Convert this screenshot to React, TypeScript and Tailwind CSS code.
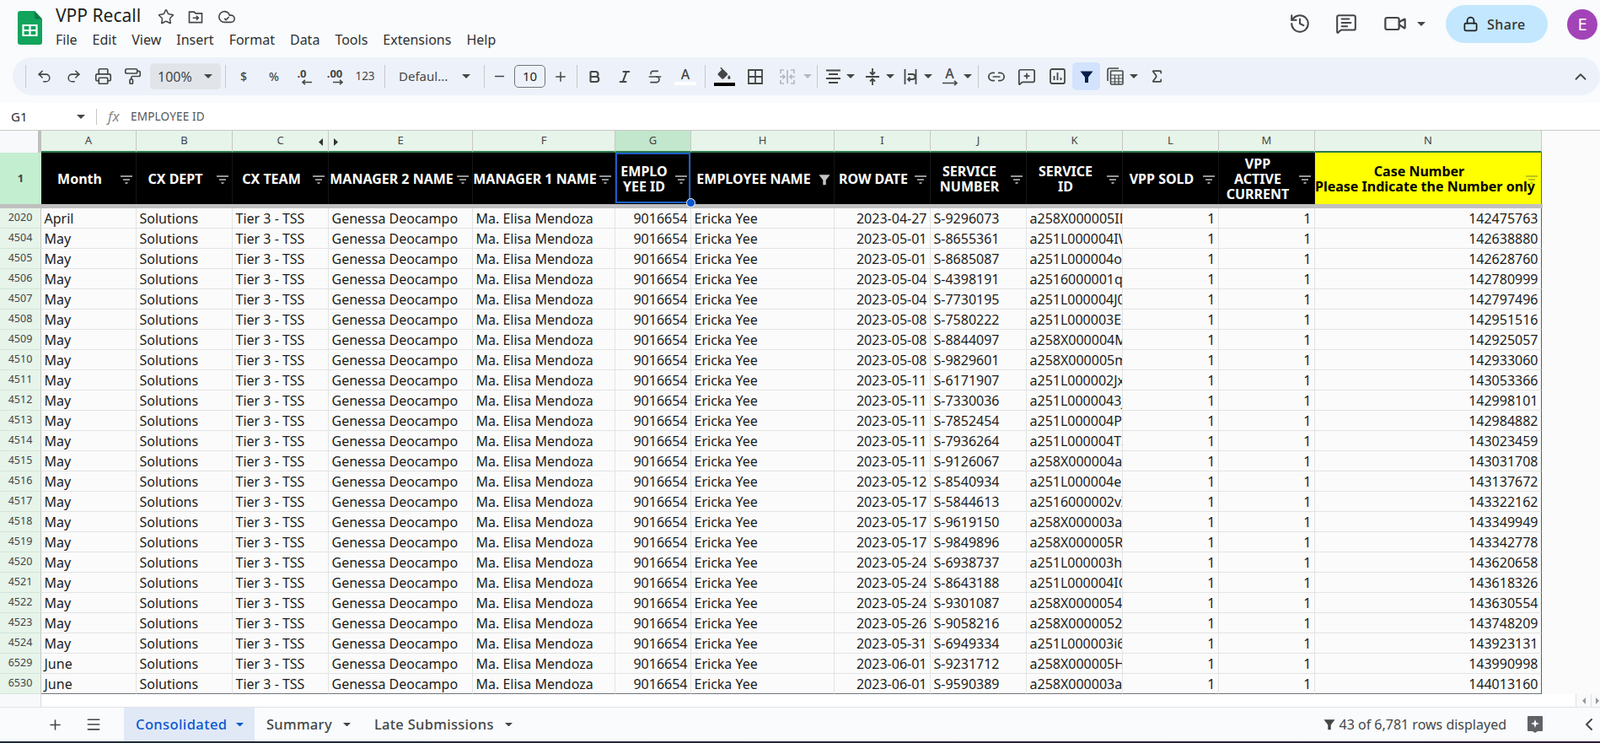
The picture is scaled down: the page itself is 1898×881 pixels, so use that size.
import React from "react";
import {
  Undo2, Redo2, Printer, PaintRoller, Bold, Italic, Strikethrough, Link2, MessageSquarePlus, Sigma,
  ChevronUp, ChevronLeft, History, MessageSquareText, Video, Lock, Star, Plus, Minus, Menu as MenuIcon,
} from "lucide-react";

const ic = "#444746";
const cols = "grid grid-cols-[49px_113px_114px_114px_171px_169px_90px_170px_114px_114px_114px_114px_114px_269px]";

const Caret = ({ color = ic, w = 10 }: { color?: string; w?: number }) => (
  <svg width={w} height={w / 2} viewBox="0 0 10 5"><path d="M0 0h10L5 5z" fill={color} /></svg>
);
const Sep = ({ ml, mr = 0 }: { ml: string; mr?: number }) => (
  <div className={`${ml} h-[27px] w-px shrink-0 bg-[#c7c7c7]`} style={{ marginRight: mr }} />
);
const Btn = ({ w, children, className = "" }: { w: string; children: React.ReactNode; className?: string }) => (
  <div className={`${w} h-[31px] shrink-0 flex items-center justify-center ${className}`}>{children}</div>
);
const Funnel = ({ s = 16, color = ic }: { s?: number; color?: string }) => (
  <svg width={s} height={s} viewBox="0 0 16 16"><path d="M0.5 1.5h15L10 8.5V15H6V8.5z" fill={color} /></svg>
);
const FilterLines = ({ color = "#c4c4c4" }: { color?: string }) => (
  <svg width="14" height="10" viewBox="0 0 14 10">
    <path d="M0 1h14M3 5h8M5.5 9h3" stroke={color} strokeWidth="1.7" fill="none" />
  </svg>
);

const rows: [string, string, string, string, string, string][] = [
  ["2020", "April", "2023-04-27", "S-9296073", "a258X000005IBCQA2", "142475763"],
  ["4504", "May", "2023-05-01", "S-8655361", "a251L000004IWSQA2", "142638880"],
  ["4505", "May", "2023-05-01", "S-8685087", "a251L000004o7IQAQ", "142628760"],
  ["4506", "May", "2023-05-04", "S-4398191", "a2516000001qXYQAY", "142780999"],
  ["4507", "May", "2023-05-04", "S-7730195", "a251L000004J0IQAU", "142797496"],
  ["4508", "May", "2023-05-08", "S-7580222", "a251L000003EgQAI", "142951516"],
  ["4509", "May", "2023-05-08", "S-8844097", "a258X000004McQAI", "142925057"],
  ["4510", "May", "2023-05-08", "S-9829601", "a258X000005mJQAQ", "142933060"],
  ["4511", "May", "2023-05-11", "S-6171907", "a251L000002JxEQAU", "143053366"],
  ["4512", "May", "2023-05-11", "S-7330036", "a251L0000043jTQAQ", "142998101"],
  ["4513", "May", "2023-05-11", "S-7852454", "a251L000004PVQAY", "142984882"],
  ["4514", "May", "2023-05-11", "S-7936264", "a251L000004T3QAI", "143023459"],
  ["4515", "May", "2023-05-11", "S-9126067", "a258X000004a7QAQ", "143031708"],
  ["4516", "May", "2023-05-12", "S-8540934", "a251L000004elEQAQ", "143137672"],
  ["4517", "May", "2023-05-17", "S-5844613", "a2516000002vXQAQ", "143322162"],
  ["4518", "May", "2023-05-17", "S-9619150", "a258X000003aMQAQ", "143349949"],
  ["4519", "May", "2023-05-17", "S-9849896", "a258X000005R6QAI", "143342778"],
  ["4520", "May", "2023-05-24", "S-6938737", "a251L000003hv1QAA", "143620658"],
  ["4521", "May", "2023-05-24", "S-8643188", "a251L000004IOSQA2", "143618326"],
  ["4522", "May", "2023-05-24", "S-9301087", "a258X00000542QAA", "143630554"],
  ["4523", "May", "2023-05-26", "S-9058216", "a258X0000052CQAQ", "143748209"],
  ["4524", "May", "2023-05-31", "S-6949334", "a251L000003i6nQAA", "143923131"],
  ["6529", "June", "2023-06-01", "S-9231712", "a258X000005HLQAY", "143990998"],
  ["6530", "June", "2023-06-01", "S-9590389", "a258X000003a5QAA", "144013160"],
];

const letters = ["A", "B", "C", "E", "F", "G", "H", "I", "J", "K", "L", "M", "N"];
const heads: { t: React.ReactNode; f?: boolean }[] = [
  { t: "Month" }, { t: "CX DEPT" }, { t: "CX TEAM" }, { t: "MANAGER 2 NAME" }, { t: "MANAGER 1 NAME" },
  { t: <>EMPLO<br />YEE ID</> }, { t: "EMPLOYEE NAME", f: true }, { t: "ROW DATE" },
  { t: <>SERVICE<br />NUMBER</> }, { t: <>SERVICE<br />ID</> }, { t: "VPP SOLD" },
  { t: <>VPP<br />ACTIVE<br />CURRENT</> },
];

const Cell = ({ children, right, last }: { children: React.ReactNode; right?: boolean; last?: boolean }) => (
  <div className={`h-[24px] leading-[24px] px-[3.5px] overflow-hidden whitespace-nowrap text-[#1c1c1c] border-b ${last ? "border-b-[#70757a]" : "border-b-[#e2e3e3]"} border-r border-r-[#e2e3e3] ${right ? "text-right" : ""}`}>
    {children}
  </div>
);

export default function App() {
  return (
    <div className="w-[1898px] h-[881px] flex flex-col overflow-hidden bg-[#f9fbfd] font-['Roboto',sans-serif] text-[#444746]">
      {/* Title bar */}
      <div className="h-[68px] shrink-0 flex">
        <div className="pl-[21px] pt-[13px] w-[66px] shrink-0">
          <svg width="29" height="40" viewBox="0 0 29 40">
            <path d="M3 0h17l9 9.5V37a3 3 0 0 1-3 3H3a3 3 0 0 1-3-3V3a3 3 0 0 1 3-3z" fill="#11a45c" />
            <path d="M20 0l9 9.5h-6.5A2.5 2.5 0 0 1 20 7z" fill="#0b7d45" />
            <path d="M6.5 17h16v12h-16z" fill="none" stroke="#fff" strokeWidth="2.2" />
            <path d="M14.5 17v12M6.5 23h16" stroke="#fff" strokeWidth="2.2" />
          </svg>
        </div>
        <div className="flex flex-col">
          <div className="flex items-center h-[36px]">
            <span className="text-[21px] leading-[36px] text-[#1f1f1f] w-[121px]">VPP Recall</span>
            <Star size={20} strokeWidth={1.8} color={ic} className="mr-[15px] mt-[4px]" />
            <svg width="20" height="20" viewBox="0 0 24 24" fill="none" stroke={ic} strokeWidth="2" className="mr-[15px] mt-[4px]">
              <path d="M3 5h7l2 2h9v13H3z" /><path d="M8 13.5h8M13 10.5l3 3-3 3" />
            </svg>
            <svg width="24" height="22" viewBox="0 0 24 24" fill="none" stroke={ic} strokeWidth="1.8" className="mt-[4px]">
              <path d="M17.5 19H9a7 7 0 1 1 6.71-9h1.79a4.5 4.5 0 1 1 0 9Z" /><path d="m9 14 2 2 4-4" />
            </svg>
          </div>
          <div className="flex gap-[18px] text-[16px] leading-[22px] text-[#303030] mt-[0px]">
            {["File", "Edit", "View", "Insert", "Format", "Data", "Tools", "Extensions", "Help"].map((m) => (
              <span key={m}>{m}</span>
            ))}
          </div>
        </div>
        <div className="ml-auto flex items-start pt-[6px] pr-[3px]">
          <History size={26} strokeWidth={1.9} color={ic} className="mt-[9px] mr-[29px]" />
          <MessageSquareText size={26} strokeWidth={1.9} color={ic} className="mt-[9px] mr-[31px]" />
          <Video size={28} strokeWidth={1.9} color={ic} className="mt-[8px] mr-[12px]" />
          <div className="mt-[20px] mr-[24px]"><Caret /></div>
          <div className="w-[121px] h-[45px] rounded-full bg-[#c2e7ff] flex items-center pl-[20px] text-[#1f1f1f]">
            <Lock size={19} strokeWidth={2.2} color="#1f1f1f" />
            <span className="ml-[10px] text-[16px] font-medium tracking-[0.4px] text-[#333]">Share</span>
          </div>
          <div className="ml-[23px] mt-[5px] w-[36px] h-[36px] rounded-full bg-[#a244b8] text-white flex items-center justify-center text-[20px]">E</div>
        </div>
      </div>

      {/* Toolbar */}
      <div className="h-[45px] shrink-0 ml-[15px] rounded-l-[23px] rounded-r-[23px] bg-[#edf2fa] flex items-center text-[#444746]">
        <Sep ml="ml-[15px]" />
        <div className="ml-[3.5px] flex">
          <Btn w="w-[35px]"><Undo2 size={19} strokeWidth={1.9} color={ic} /></Btn>
          <Btn w="w-[35px]"><Redo2 size={19} strokeWidth={1.9} color={ic} /></Btn>
          <Btn w="w-[35px]"><Printer size={21} strokeWidth={1.9} color={ic} /></Btn>
          <Btn w="w-[35px]"><PaintRoller size={21} strokeWidth={1.9} color={ic} /></Btn>
        </div>
        <div className="ml-[3.5px] w-[84px] h-[31px] rounded-[5px] bg-[#e1e5ea] flex items-center pl-[9px] pr-[10px] justify-between">
          <span className="text-[16px]">100%</span><Caret />
        </div>
        <Sep ml="ml-[5px]" />
        <div className="ml-[3px] flex text-[#444746]">
          <Btn w="w-[36px]"><span className="text-[14px] font-medium">$</span></Btn>
          <Btn w="w-[36px]"><span className="text-[14px] font-medium">%</span></Btn>
          <Btn w="w-[36px]">
            <div className="flex flex-col items-center leading-none">
              <span className="text-[13px] font-bold leading-[13px] -ml-[6px]">.0</span>
              <svg width="14" height="7" viewBox="0 0 14 7" className="ml-[6px]"><path d="M13 3.5H2M5 .8 2 3.5l3 2.7" fill="none" stroke={ic} strokeWidth="1.6" /></svg>
            </div>
          </Btn>
          <Btn w="w-[36px]">
            <div className="flex flex-col items-center leading-none">
              <span className="text-[13px] font-bold leading-[13px]">.00</span>
              <svg width="14" height="7" viewBox="0 0 14 7" className="ml-[8px]"><path d="M1 3.5h11M9 .8l3 2.7-3 2.7" fill="none" stroke={ic} strokeWidth="1.6" /></svg>
            </div>
          </Btn>
          <Btn w="w-[36px]"><span className="text-[13.5px]">123</span></Btn>
        </div>
        <Sep ml="ml-[5px]" />
        <div className="ml-[5px] w-[107px] h-[31px] flex items-center justify-between pl-[11px] pr-[11px]">
          <span className="text-[15px]">Defaul...</span><Caret />
        </div>
        <Sep ml="ml-[5px]" />
        <Btn w="w-[35px]"><Minus size={17} strokeWidth={2} color={ic} /></Btn>
        <div className="w-[37px] h-[27px] border border-[#70757a] rounded-[5px] flex items-center justify-center text-[15px] text-[#1f1f1f]">10</div>
        <Btn w="w-[35px]"><Plus size={18} strokeWidth={2} color={ic} /></Btn>
        <Sep ml="ml-[2px]" />
        <div className="ml-[2px] flex">
          <Btn w="w-[36px]"><Bold size={18} strokeWidth={2.8} color={ic} /></Btn>
          <Btn w="w-[36px]"><Italic size={18} strokeWidth={2.8} color={ic} /></Btn>
          <Btn w="w-[36px]"><Strikethrough size={20} strokeWidth={2} color={ic} /></Btn>
          <Btn w="w-[36px]">
            <div className="flex flex-col items-center">
              <span className="text-[16px] font-medium leading-[17px] text-[#444746]">A</span>
              <div className="w-[26px] h-[4px] bg-white" />
            </div>
          </Btn>
        </div>
        <Sep ml="ml-[5px]" />
        <div className="ml-[4px] flex">
          <Btn w="w-[36px]">
            <div className="flex flex-col items-center">
              <svg width="20" height="18" viewBox="0 0 24 20">
                <path d="M16.56 8.94 7.62 0 6.21 1.41l2.38 2.38-5.15 5.15c-.59.59-.59 1.54 0 2.12l5.5 5.5c.29.29.68.44 1.06.44s.77-.15 1.06-.44l5.5-5.5c.59-.58.59-1.53 0-2.12z" fill={ic} />
                <path d="M19 11.5s-2 2.17-2 3.5c0 1.1.9 2 2 2s2-.9 2-2c0-1.33-2-3.5-2-3.5z" fill={ic} />
              </svg>
              <div className="w-[25px] h-[4px] bg-black mt-[1px]" />
            </div>
          </Btn>
          <Btn w="w-[38px]">
            <svg width="18" height="18" viewBox="0 0 18 18" fill="none" stroke={ic} strokeWidth="1.8"><path d="M1 1h16v16H1zM9 1v16M1 9h16" /></svg>
          </Btn>
          <Btn w="w-[38px]">
            <svg width="20" height="20" viewBox="0 0 20 20" fill="none" stroke="#b4b8bd" strokeWidth="1.7">
              <path d="M6 2H2v4M6 18H2v-4M14 2h4v4M14 18h4v-4M1 10h6M4.5 7.5 7 10l-2.500 2.500M19 10h-6M15.500 7.500 13 10l2.500 2.500M10 2v16" strokeDasharray="none" />
            </svg>
          </Btn>
          <div className="w-[10px] flex items-center"><Caret color="#b4b8bd" /></div>
        </div>
        <Sep ml="ml-[6px]" />
        <div className="ml-[2px] flex items-center">
          <Btn w="w-[32px]">
            <svg width="19" height="18" viewBox="0 0 19 18" fill="none" stroke={ic} strokeWidth="1.8"><path d="M1 1.500h17M4 6h11M1 11h17M4 16h11" /></svg>
          </Btn>
          <Caret />
          <div className="ml-[5px]" />
          <Btn w="w-[32px]">
            <svg width="18" height="22" viewBox="0 0 18 22" fill="none" stroke={ic} strokeWidth="1.8"><path d="M1 11h16M9 1v7M6 5.500 9 8.500l3-3M9 21v-7M6 16.500l3-3 3 3" /></svg>
          </Btn>
          <Caret />
          <div className="ml-[3px]" />
          <Btn w="w-[32px]">
            <svg width="16" height="20" viewBox="0 0 16 20" fill="none" stroke={ic} strokeWidth="1.8"><path d="M1.500 1v18M14.500 1v18M5 7h5.500a2.500 2.500 0 0 1 0 6H5.500M7.500 10.500l-2.500 2.500 2.500 2.500" /></svg>
          </Btn>
          <Caret />
          <div className="ml-[4.5px]" />
          <Btn w="w-[32px]">
            <div className="flex flex-col items-center">
              <span className="text-[16px] font-medium leading-[15px]">A</span>
              <svg width="20" height="7" viewBox="0 0 20 7" fill="none" stroke={ic} strokeWidth="1.6"><path d="M1 3.500h17M15 .8l3 2.700-3 2.700" /></svg>
            </div>
          </Btn>
          <Caret />
        </div>
        <Sep ml="ml-[7px]" />
        <div className="ml-[3.5px] flex items-center">
          <Btn w="w-[36px]"><Link2 size={22} strokeWidth={1.9} color={ic} /></Btn>
          <Btn w="w-[36px]"><MessageSquarePlus size={22} strokeWidth={1.9} color={ic} /></Btn>
          <Btn w="w-[36px]">
            <svg width="19" height="19" viewBox="0 0 19 19" fill="none" stroke={ic} strokeWidth="1.8"><rect x="1" y="1" width="17" height="17" rx="2" /><path d="M5.500 14V9M9.500 14V5M13.500 14v-3" /></svg>
          </Btn>
          <div className="w-[33px] h-[33px] rounded-[5px] bg-[#d3e3fd] flex items-center justify-center"><Funnel s={16} color="#041e49" /></div>
          <Btn w="w-[35px]">
            <svg width="20" height="21" viewBox="0 0 20 21" fill="none" stroke={ic} strokeWidth="1.6"><path d="M1 16V3a2 2 0 0 1 2-2h11" /><rect x="4.500" y="4" width="14.500" height="16" rx="1" /><path d="M4.500 9H19M4.500 13h14.500M4.500 17h14.500M9.500 9v11M14 9v11" strokeWidth="1.200" /></svg>
          </Btn>
          <Caret />
          <div className="ml-[4px]" />
          <Btn w="w-[36px]"><Sigma size={19} strokeWidth={2.2} color={ic} /></Btn>
        </div>
        <div className="ml-auto mr-[12px]"><ChevronUp size={22} strokeWidth={2} color={ic} /></div>
      </div>

      {/* Formula bar */}
      <div className="mt-[9px] h-[32px] shrink-0 bg-white flex items-center">
        <span className="ml-[13px] w-[78px] text-[15px] text-[#303030]">G1</span>
        <Caret />
        <div className="ml-[13px] w-px h-[19px] bg-[#c7c7c7]" />
        <span className="ml-[13px] w-[27px] italic text-[17px] font-['Liberation_Serif',serif] text-[#888]">fx</span>
        <span className="text-[13.500px] text-[#555] tracking-[0.2px]">EMPLOYEE ID</span>
      </div>

      {/* Grid */}
      <div className="flex-1 bg-[#fbfbfb] border-t border-t-[#c7c7c7] flex flex-col font-['Liberation_Sans',Arial,sans-serif] text-[16px]">
        {/* column letters */}
        <div className={`${cols} h-[26px] shrink-0 w-[1830px]`}>
          <div className="bg-[#f8f9fa] border-r-[4px] border-r-[#c0c0c0]" />
          {letters.map((l) => (
            <div key={l} className={`relative flex items-center justify-center font-['Roboto',sans-serif] text-[13px] text-[#444] border-r border-r-[#c7c7c7] border-b-[2px] border-b-[#2b7a4b] ${l === "G" ? "bg-[#c2e7cc]" : "bg-[#e6f4ea]"}`}>
              {l}
              {l === "C" && (
                <svg width="5" height="9" viewBox="0 0 5 9" className="absolute right-[6px] top-[9px]"><path d="M5 0v9L0 4.500z" fill="#333" /></svg>
              )}
              {l === "E" && (
                <svg width="5" height="9" viewBox="0 0 5 9" className="absolute left-[6px] top-[9px]"><path d="M0 0v9l5-4.500z" fill="#333" /></svg>
              )}
            </div>
          ))}
        </div>
        {/* frozen header */}
        <div className={`${cols} h-[61px] shrink-0 w-[1830px]`}>
          <div className="bg-[#c4eed0] flex items-center justify-center font-['Roboto',sans-serif] font-bold text-[13px] text-[#444]">1</div>
          {heads.map((h, i) => (
            <div key={i} className="relative bg-black border-r border-r-[#151515] flex items-center pr-[21px] text-white font-bold leading-[18px] text-center whitespace-nowrap">
              <div className="w-full">{h.t}</div>
              <div className="absolute right-[4px] top-[25px] w-[14px] h-[14px] flex items-center justify-center">
                {h.f ? <Funnel s={14} color="#c4c4c4" /> : <FilterLines />}
              </div>
              {i === 5 && (
                <>
                  <div className="absolute left-0 top-0 right-0 bottom-[1px] border-2 border-[#1a5fc8]" />
                  <div className="absolute right-[-6px] bottom-[-4px] z-10 w-[11px] h-[11px] rounded-full bg-[#0b57d0] border border-white" />
                </>
              )}
            </div>
          ))}
          <div className="relative bg-[#ffff00] border-r border-r-[#2b7a4b] flex items-center pr-[21px] text-black font-bold leading-[18px] text-center whitespace-nowrap">
            <div className="w-full">Case Number<br />Please Indicate the Number only</div>
            <div className="absolute right-[4px] top-[25px] w-[14px] h-[14px] flex items-center justify-center"><FilterLines color="#a3b522" /></div>
          </div>
        </div>
        {/* thick separator */}
        <div className="h-[5px] shrink-0 w-[1830px] bg-[#c0c0c0]" />
        {/* data rows */}
        {rows.map((r, i) => {
          const last = i === rows.length - 1;
          return (
            <div key={r[0]} className={`${cols} h-[24px] shrink-0 w-[1830px]`}>
              <div className="bg-[#e6f4ea] border-b border-b-[#d5e5da] border-r border-r-[#c7c7c7] font-['Roboto',sans-serif] text-[12.500px] leading-[21px] text-center text-[#444]">{r[0]}</div>
              <Cell last={last}>{r[1]}</Cell>
              <Cell last={last}>Solutions</Cell>
              <Cell last={last}>Tier 3 - TSS</Cell>
              <Cell last={last}>Genessa Deocampo</Cell>
              <Cell last={last}>Ma. Elisa Mendoza</Cell>
              <Cell last={last} right>9016654</Cell>
              <Cell last={last}>Ericka Yee</Cell>
              <Cell last={last} right>{r[2]}</Cell>
              <Cell last={last}>{r[3]}</Cell>
              <Cell last={last}>{r[4]}</Cell>
              <Cell last={last} right>1</Cell>
              <Cell last={last} right>1</Cell>
              <div className={`h-[24px] leading-[24px] px-[3.5px] text-right text-[#1c1c1c] border-b ${last ? "border-b-[#70757a]" : "border-b-[#e2e3e3]"} border-r border-r-[#2b7a4b]`}>{r[5]}</div>
            </div>
          );
        })}
        {/* scrollbar strip */}
        <div className="flex-1 bg-white flex">
          <div className="w-[49px] bg-[#f8f9fa] border-r border-r-[#d9d9d9]" />
          <div className="ml-auto flex">
            <div className="w-[18px] bg-[#f8f9fa] border-l border-l-[#e0e0e0] flex items-center justify-center">
              <svg width="4" height="8" viewBox="0 0 4 8"><path d="M4 0v8L0 4z" fill="#999" /></svg>
            </div>
            <div className="w-[11px] bg-[#f8f9fa] border-l border-l-[#e0e0e0] flex items-center justify-end pr-[1px]">
              <svg width="4" height="8" viewBox="0 0 4 8"><path d="M0 0v8l4-4z" fill="#999" /></svg>
            </div>
          </div>
        </div>
      </div>

      {/* Sheet tabs */}
      <div className="h-[41px] shrink-0 border-t border-t-[#e3e3e3] flex items-center">
        <div className="ml-[56px] w-[20px]"><Plus size={19} strokeWidth={2} color={ic} /></div>
        <div className="ml-[25px]"><MenuIcon size={20} strokeWidth={1.9} color={ic} /></div>
        <div className="ml-[26px] w-[155px] h-full bg-[#e1e9f7] flex items-center pl-[14px] text-[#0b57d0]">
          <span className="text-[16.500px] font-medium tracking-[0.4px] w-[119px]">Consolidated</span>
          <Caret color="#0b57d0" w={9} />
        </div>
        <span className="ml-[14px] text-[16.500px] font-medium tracking-[0.3px] text-[#444746]">Summary</span>
        <div className="ml-[13px]"><Caret w={9} /></div>
        <span className="ml-[28px] text-[16.500px] font-medium tracking-[0.3px] text-[#444746]">Late Submissions</span>
        <div className="ml-[13px]"><Caret w={9} /></div>
        <div className="ml-auto flex items-center">
          <Funnel s={14} color={ic} />
          <span className="ml-[4px] text-[16px] text-[#444746]">43 of 6,781 rows displayed</span>
          <svg width="20" height="22" viewBox="0 0 20 22" className="ml-[24px]">
            <path d="M2 1h16a1 1 0 0 1 1 1v16a1 1 0 0 1-1 1h-5l-3 2-3-2H2a1 1 0 0 1-1-1V2a1 1 0 0 1 1-1z" fill="#5f6368" />
            <path d="M10 5l1.300 3.700L15 10l-3.700 1.300L10 15l-1.300-3.700L5 10l3.700-1.300z" fill="#fff" />
          </svg>
          <ChevronLeft size={24} strokeWidth={2} color={ic} className="ml-[42px] mr-[1px]" />
        </div>
      </div>
      <div className="h-[2px] shrink-0 bg-linear-to-r from-[#1b2a38] to-[#2c1b3a]" />
    </div>
  );
}
